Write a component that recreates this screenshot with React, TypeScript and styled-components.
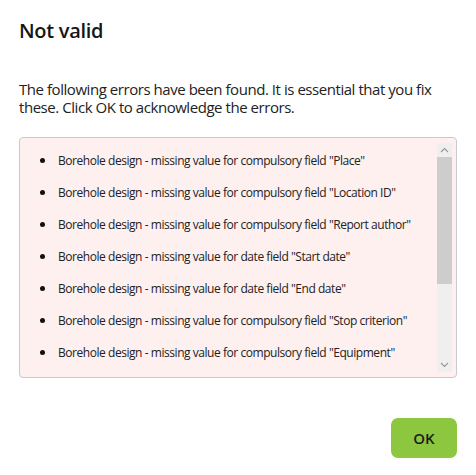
import styled, { createGlobalStyle } from "styled-components";

const errors = [
  'Borehole design - missing value for compulsory field "Place"',
  'Borehole design - missing value for compulsory field "Location ID"',
  'Borehole design - missing value for compulsory field "Report author"',
  'Borehole design - missing value for date field "Start date"',
  'Borehole design - missing value for date field "End date"',
  'Borehole design - missing value for compulsory field "Stop criterion"',
  'Borehole design - missing value for compulsory field "Equipment"',
];

const GlobalStyle = createGlobalStyle`
  html, body {
    margin: 0;
    padding: 0;
    background: #ffffff;
  }
  body {
    font-family: "Open Sans", "Noto Sans", sans-serif;
    color: #1f1f1f;
  }
`;

const App = () => {
  return (
    <>
      <GlobalStyle />
      <Dialog>
        <Title>Not valid</Title>
        <Message>
          The following errors have been found. It is essential that you fix
          these. Click OK to acknowledge the errors.
        </Message>
        <ErrorBox>
          <ErrorList>
            {errors.map((e) => (
              <li key={e}>{e}</li>
            ))}
          </ErrorList>
          <ScrollBar>
            <ScrollArrow>
              <svg width="9" height="6" viewBox="0 0 9 6">
                <path d="M1 5 L4.5 1.5 L8 5" fill="none" stroke="#9a9a9a" strokeWidth="1.2" />
              </svg>
            </ScrollArrow>
            <Track>
              <Thumb />
            </Track>
            <ScrollArrow>
              <svg width="9" height="6" viewBox="0 0 9 6">
                <path d="M1 1 L4.5 4.5 L8 1" fill="none" stroke="#9a9a9a" strokeWidth="1.2" />
              </svg>
            </ScrollArrow>
          </ScrollBar>
        </ErrorBox>
        <Footer>
          <OkButton>OK</OkButton>
        </Footer>
      </Dialog>
    </>
  );
};

export default App;

const Dialog = styled.div`
  width: 476px;
  height: 475px;
  box-sizing: border-box;
  padding: 17px 19px 0 19px;
  display: flex;
  flex-direction: column;
  background: #ffffff;
`;

const Title = styled.h2`
  margin: 0;
  font-size: 20px;
  line-height: 28px;
  font-weight: 600;
  letter-spacing: -0.3px;
  color: #161616;
`;

const Message = styled.p`
  margin: 35px 0 0 0;
  font-size: 15px;
  line-height: 18px;
  letter-spacing: -0.45px;
  color: #222222;
`;

const ErrorBox = styled.div`
  margin-top: 21px;
  height: 241px;
  box-sizing: border-box;
  border: 1px solid #c8c9d3;
  border-radius: 4px;
  background: #fdf0ef;
  display: flex;
  overflow: hidden;
`;

const ErrorList = styled.ul`
  flex: 1;
  margin: 0;
  padding: 6px 0 0 20px;
  list-style: none;

  & > li {
    display: flex;
    align-items: center;
    height: 32px;
    font-size: 12px;
    letter-spacing: -0.45px;
    color: #222222;
    white-space: nowrap;
  }

  & > li::before {
    content: "";
    flex: none;
    width: 5px;
    height: 5px;
    border-radius: 50%;
    background: #111111;
    margin-right: 13px;
  }
`;

const ScrollBar = styled.div`
  flex: none;
  width: 15px;
  margin: 5px 4px 5px 0;
  display: flex;
  flex-direction: column;
  background: #efefef;
`;

const ScrollArrow = styled.div`
  height: 14px;
  display: flex;
  align-items: center;
  justify-content: center;
`;

const Track = styled.div`
  flex: 1;
  display: flex;
  flex-direction: column;
`;

const Thumb = styled.div`
  height: 127px;
  background: #cdcdcd;
`;

const Footer = styled.div`
  margin-top: 40px;
  display: flex;
  justify-content: flex-end;
`;

const OkButton = styled.button`
  width: 66px;
  height: 40px;
  border: none;
  border-radius: 7px;
  background: #8dc63f;
  font-family: "Open Sans", "Noto Sans", sans-serif;
  font-size: 15px;
  font-weight: 600;
  color: #1c1c1c;
  cursor: pointer;
`;
